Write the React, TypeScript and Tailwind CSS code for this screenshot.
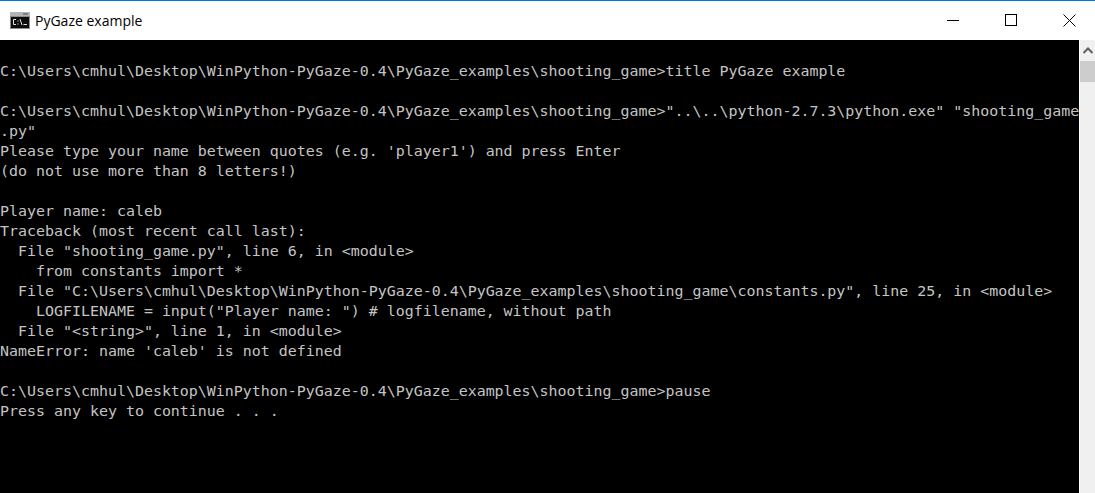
const lines = [
  '',
  'C:\\Users\\cmhul\\Desktop\\WinPython-PyGaze-0.4\\PyGaze_examples\\shooting_game>title PyGaze example',
  '',
  'C:\\Users\\cmhul\\Desktop\\WinPython-PyGaze-0.4\\PyGaze_examples\\shooting_game>"..\\..\\python-2.7.3\\python.exe" "shooting_game',
  '.py"',
  "Please type your name between quotes (e.g. 'player1') and press Enter",
  '(do not use more than 8 letters!)',
  '',
  'Player name: caleb',
  'Traceback (most recent call last):',
  '  File "shooting_game.py", line 6, in <module>',
  '    from constants import *',
  '  File "C:\\Users\\cmhul\\Desktop\\WinPython-PyGaze-0.4\\PyGaze_examples\\shooting_game\\constants.py", line 25, in <module>',
  '    LOGFILENAME = input("Player name: ") # logfilename, without path',
  '  File "<string>", line 1, in <module>',
  "NameError: name 'caleb' is not defined",
  '',
  'C:\\Users\\cmhul\\Desktop\\WinPython-PyGaze-0.4\\PyGaze_examples\\shooting_game>pause',
  'Press any key to continue . . .',
];

const CmdIcon = () => (
  <svg width="20" height="17" viewBox="0 0 20 17" className="shrink-0">
    <rect x="0" y="0" width="20" height="17" fill="#8a8a8a" />
    <rect x="0" y="0" width="20" height="4" fill="#b4b4b4" />
    <rect x="13" y="1" width="5" height="2" fill="#808080" />
    <rect x="1" y="5" width="18" height="11" fill="#0c0c0c" />
    <path d="M6 7.5H3.5V12.5H6M8 8.5V9.5M8 11.5V12.5M10 7L12 13M13.5 12.5H17" stroke="#e0e0e0" fill="none" />
  </svg>
);

export default function App() {
  return (
    <div className="w-[1095px] h-[493px] flex flex-col overflow-hidden bg-white">
      <div className="h-[40px] shrink-0 flex items-center border-t border-[#0078d7] bg-white">
        <div className="ml-[10px]"><CmdIcon /></div>
        <span className="ml-[5px] text-[14px] text-black font-['Open_Sans','Noto_Sans',sans-serif]">PyGaze example</span>
        <div className="ml-auto mr-[19px] mb-[1px] flex items-center gap-[46px]">
          <div className="w-[12px] h-px bg-black" />
          <div className="w-[12px] h-[12px] border border-black" />
          <svg width="13" height="13" viewBox="0 0 13 13"><path d="M0.5 0.5L12.5 12.5M12.5 0.5L0.5 12.5" stroke="#000" fill="none" /></svg>
        </div>
      </div>
      <div className="flex-1 flex min-h-0">
        <div className="w-[1079px] bg-black text-[#c4c4c4] font-['DejaVu_Sans_Mono',monospace] text-[14.95px] leading-[20px] whitespace-pre overflow-hidden">
          {lines.map((l, i) => (
            <div key={i} className="h-[20px] pt-[1px]">{l}</div>
          ))}
        </div>
        <div className="w-[15px] ml-auto flex flex-col bg-[#f0f0f0]">
          <div className="h-[21px] flex items-center justify-center">
            <svg width="10" height="7" viewBox="0 0 10 7"><path d="M0.5 6L5 1.5L9.5 6" stroke="#606060" strokeWidth="2" fill="none" /></svg>
          </div>
          <div className="h-[21px] bg-[#cdcdcd]" />
        </div>
      </div>
    </div>
  );
}
